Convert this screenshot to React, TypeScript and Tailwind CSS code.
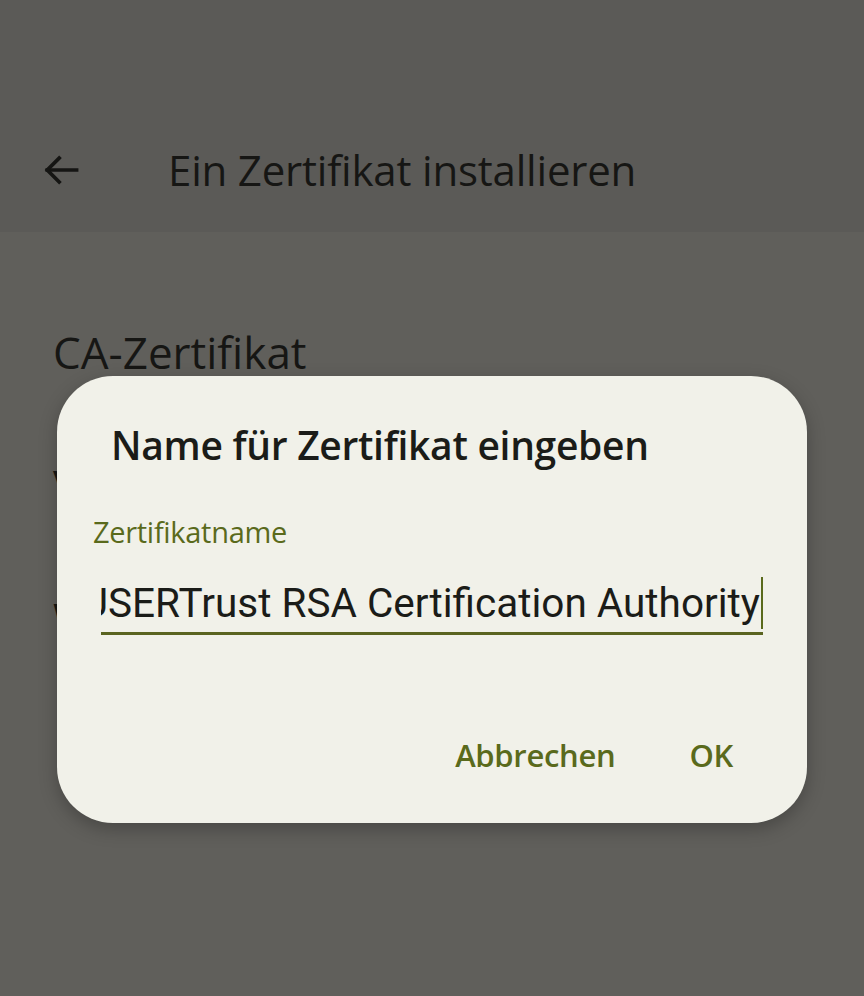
import React from "react";

const font = { fontFamily: "'Open Sans', Roboto, sans-serif" };

const BackArrow = () => (
	<svg width="44" height="44" viewBox="0 0 24 24" fill="none" stroke="#151513" strokeWidth="2" strokeLinecap="square">
		<path d="M20.5 12H4.5" />
		<path d="M11 5.5L4.5 12L11 18.5" />
	</svg>
);

const App = () => {
	return (
		<div className="relative h-[996px] w-[864px] overflow-hidden bg-[#605f5b] text-[#161614]" style={font}>
			{/* app bar */}
			<div className="flex h-[232px] items-end bg-[#5b5a57] pb-[36px]">
				<div className="flex items-center">
					<div className="ml-[39px] flex h-[44px] w-[44px] items-center justify-center">
						<BackArrow />
					</div>
					<h1 className="ml-[85px] text-[42px] leading-[52px] tracking-[-0.2px]">Ein Zertifikat installieren</h1>
				</div>
			</div>

			{/* list under the dialog */}
			<div className="flex flex-col pl-[53px] pt-[94px] text-[44px] leading-[52px]">
				<div>CA-Zertifikat</div>
				<div className="mt-[81px]">VPN- und App-Nutzerzertifikat</div>
				<div className="mt-[81px]">WLAN-Zertifikat</div>
			</div>

			{/* dialog */}
			<div className="absolute left-[57px] top-[376px] w-[750px] rounded-[56px] bg-[#f1f1e9] shadow-[0_6px_18px_rgba(0,0,0,0.25)]">
				<div className="flex flex-col pb-[48px]">
					<h2 className="ml-[54px] mt-[47px] text-[39px] font-semibold leading-[44px] tracking-[-0.3px] text-[#1b1c18]">
						Name für Zertifikat eingeben
					</h2>
					<div className="mx-[44px] mt-[47px]">
						<div className="ml-[-8px] text-[29px] leading-[36px] tracking-[-0.3px] text-[#5a6a1c]">Zertifikatname</div>
						<div className="mt-[27px] flex h-[52px] items-center justify-end overflow-hidden">
							<span className="whitespace-nowrap text-[40.5px] leading-[52px] text-[#1b1c18]" style={{ fontFamily: "Roboto, sans-serif" }}>
								USERTrust RSA Certification Authority
							</span>
							<span className="ml-[1px] h-[52px] w-[2px] shrink-0 bg-[#5a6a1c]" />
						</div>
						<div className="mt-[3px] h-[3px] bg-[#5a6420]" />
					</div>
					<div className="mt-[100px] flex justify-end gap-[74px] pr-[74px] text-[31px] font-semibold leading-[40px] tracking-[-0.3px] text-[#5a6a1c]">
						<span>Abbrechen</span>
						<span>OK</span>
					</div>
				</div>
			</div>
		</div>
	);
};

export default App;
